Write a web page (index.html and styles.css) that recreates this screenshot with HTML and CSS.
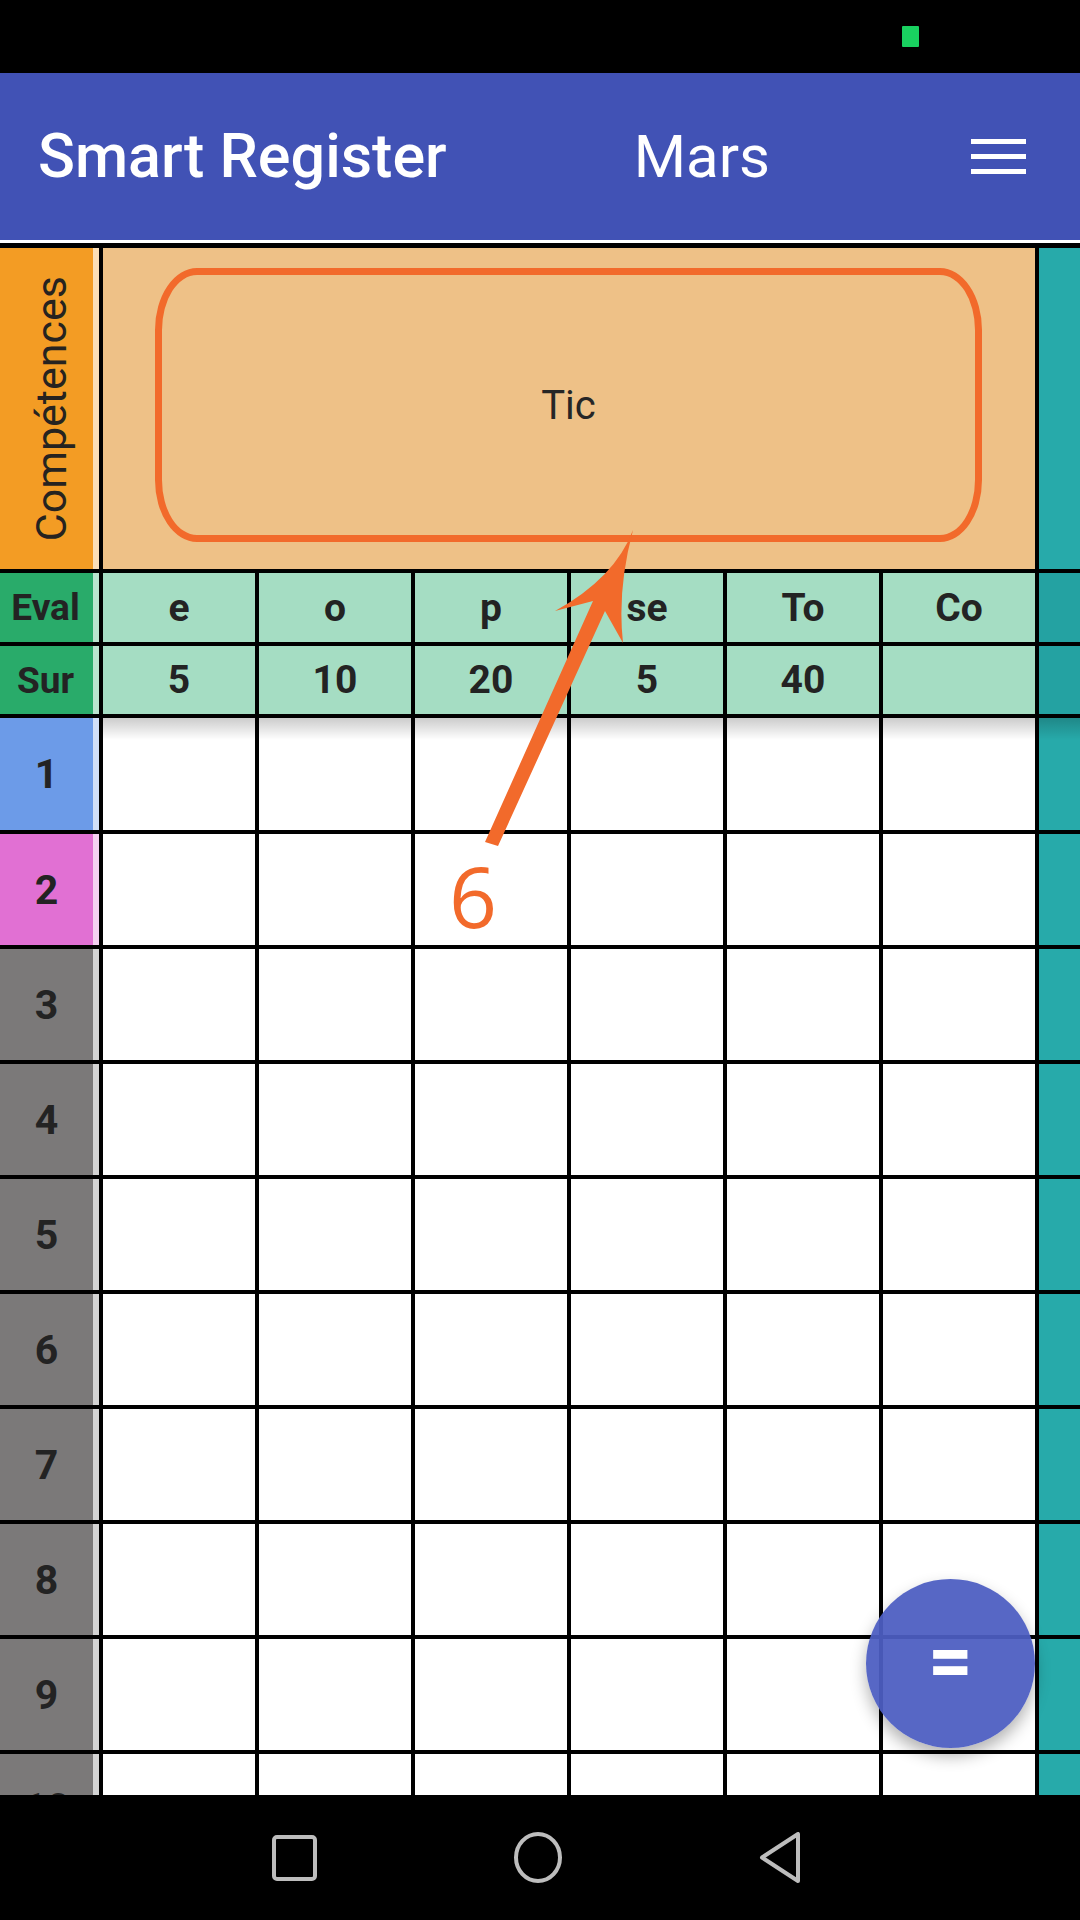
FILE: index.html
```html
<!DOCTYPE html>
<html lang="fr">
<head>
<meta charset="utf-8">
<title>Smart Register</title>
<link rel="stylesheet" href="styles.css">
</head>
<body>
<div class="status"><span class="batt"></span></div>
<header class="appbar">
  <h1 class="title">Smart Register</h1>
  <span class="month">Mars</span>
  <span class="burger"><i></i><i></i><i></i></span>
</header>
<main class="sheet">
  <div class="grid">
    <div class="lab orange"><span class="vert">Compétences</span></div>
    <div class="skill"><div class="skillbox">Tic</div></div>
    <div class="teal"></div>

    <div class="lab green">Eval</div>
    <div class="hd">e</div><div class="hd">o</div><div class="hd">p</div><div class="hd">se</div><div class="hd">To</div><div class="hd">Co</div>
    <div class="teal dark"></div>

    <div class="lab green">Sur</div>
    <div class="hd">5</div><div class="hd">10</div><div class="hd">20</div><div class="hd">5</div><div class="hd">40</div><div class="hd"></div>
    <div class="teal dark"></div>

    <div class="lab blue">1</div>
    <div class="c first"></div><div class="c first"></div><div class="c first"></div><div class="c first"></div><div class="c first"></div><div class="c first"></div>
    <div class="teal first"></div>

    <div class="lab pink">2</div>
    <div class="c"></div><div class="c"></div><div class="c"></div><div class="c"></div><div class="c"></div><div class="c"></div>
    <div class="teal"></div>

    <div class="lab gray">3</div>
    <div class="c"></div><div class="c"></div><div class="c"></div><div class="c"></div><div class="c"></div><div class="c"></div>
    <div class="teal"></div>

    <div class="lab gray">4</div>
    <div class="c"></div><div class="c"></div><div class="c"></div><div class="c"></div><div class="c"></div><div class="c"></div>
    <div class="teal"></div>

    <div class="lab gray">5</div>
    <div class="c"></div><div class="c"></div><div class="c"></div><div class="c"></div><div class="c"></div><div class="c"></div>
    <div class="teal"></div>

    <div class="lab gray">6</div>
    <div class="c"></div><div class="c"></div><div class="c"></div><div class="c"></div><div class="c"></div><div class="c"></div>
    <div class="teal"></div>

    <div class="lab gray">7</div>
    <div class="c"></div><div class="c"></div><div class="c"></div><div class="c"></div><div class="c"></div><div class="c"></div>
    <div class="teal"></div>

    <div class="lab gray">8</div>
    <div class="c"></div><div class="c"></div><div class="c"></div><div class="c"></div><div class="c"></div><div class="c"></div>
    <div class="teal"></div>

    <div class="lab gray">9</div>
    <div class="c"></div><div class="c"></div><div class="c"></div><div class="c"></div><div class="c"></div><div class="c"></div>
    <div class="teal"></div>

    <div class="lab gray last">10</div>
    <div class="c"></div><div class="c"></div><div class="c"></div><div class="c"></div><div class="c"></div><div class="c"></div>
    <div class="teal"></div>
  </div>
</main>
<nav class="navbar">
  <svg class="nav-ico" width="45" height="46" viewBox="0 0 45 46"><rect x="2" y="2" width="41" height="42" rx="3" fill="none" stroke="#bdbdbd" stroke-width="4"/></svg>
  <svg class="nav-ico" width="48" height="51" viewBox="0 0 48 51"><ellipse cx="24" cy="25.5" rx="22" ry="23.5" fill="none" stroke="#bdbdbd" stroke-width="4"/></svg>
  <svg class="nav-ico" width="42" height="51" viewBox="0 0 42 51"><path d="M39 2 L39 49 L3 25.5 Z" fill="none" stroke="#bdbdbd" stroke-width="4" stroke-linejoin="round"/></svg>
</nav>
<button class="fab">=</button>
<svg class="annot" width="1080" height="1920" viewBox="0 0 1080 1920">
  <path d="M633 530 Q615 578 555 611 L593 601 L485 842 L498 846 L605 611 L623 643 Q617 590 633 530 Z" fill="#f26a2b"/>
  <text x="473" y="928" text-anchor="middle" class="six">6</text>
</svg>
</body>
</html>
```
FILE: styles.css
```css
* { box-sizing: border-box; }
html, body { margin: 0; padding: 0; }
body {
  width: 1080px;
  height: 1920px;
  overflow: hidden;
  position: relative;
  background: #000;
  font-family: Roboto, "Liberation Sans", sans-serif;
  color: #222;
}
.status {
  height: 73px;
  background: #000;
  display: flex;
  justify-content: flex-end;
  align-items: flex-start;
  padding: 26px 161px 0 0;
}
.batt {
  width: 17px;
  height: 21px;
  background: #19d160;
  border-radius: 1px;
}
.appbar {
  height: 167px;
  background: #4152b5;
  display: flex;
  align-items: center;
  padding: 0 54px 0 38px;
  color: #fff;
}
.title {
  margin: 0;
  font-size: 61px;
  font-weight: 500;
  line-height: 1;
}
.month {
  font-size: 60px;
  font-weight: 400;
  line-height: 1;
  margin-left: 187px;
}
.burger {
  margin-left: auto;
  display: flex;
  flex-direction: column;
  gap: 10px;
}
.burger i {
  display: block;
  width: 55px;
  height: 5px;
  background: #fff;
}
.sheet {
  height: 1555px;
  overflow: hidden;
  border-top: 3px solid #fff;
  background: #000;
  padding-top: 5px;
}
.grid {
  display: grid;
  grid-template-columns: 99px repeat(6, 152px) 41px;
  grid-template-rows: 321px 69px 68px 112px repeat(9, 111px);
  gap: 4px;
  background: #000;
}
.lab {
  display: flex;
  align-items: center;
  justify-content: center;
  padding-right: 6px;
  font-weight: 700;
  font-size: 41px;
  color: #232323;
  box-shadow: inset -6px 0 0 rgba(255, 255, 255, 0.68);
}
.lab.last { align-items: flex-start; padding-top: 30px; }
.lab.green { font-size: 37px; padding-right: 8px; }
.orange { background: #f39c24; padding-left: 10px; }
.green { background: #29ab6a; }
.blue { background: #6c9be8; }
.pink { background: #e170d3; }
.gray { background: #7b7979; }
.vert {
  writing-mode: vertical-rl;
  transform: rotate(180deg);
  font-size: 43px;
  font-weight: 400;
  line-height: 1;
  color: #262320;
}
.skill {
  grid-column: span 6;
  background: #eec187;
  padding: 20px 53px 27px 52px;
  display: flex;
}
.skillbox {
  flex: 1;
  border: 7px solid #f26a2b;
  border-radius: 42px / 62px;
  display: flex;
  align-items: center;
  justify-content: center;
  font-size: 40px;
  color: #262626;
}
.teal { background: #27aaaa; }
.teal.dark { background: #24a2a2; }
.teal.first { background: linear-gradient(rgba(0,0,0,0.2), rgba(0,0,0,0) 22px), #27aaaa; }
.hd {
  background: #a5ddc3;
  display: flex;
  align-items: center;
  justify-content: center;
  font-weight: 700;
  font-size: 39px;
  color: #232323;
}
.c { background: #fff; }
.c.first { background: linear-gradient(rgba(0,0,0,0.2), rgba(0,0,0,0) 22px), #fff; }
.navbar {
  height: 125px;
  background: #000;
  display: flex;
  align-items: center;
  justify-content: center;
  gap: 197px;
  padding: 0 7px 0 0;
}
.nav-ico { display: block; }
.fab {
  position: absolute;
  left: 866px;
  top: 1579px;
  width: 169px;
  height: 169px;
  border-radius: 50%;
  border: none;
  background: rgba(76, 94, 193, 0.94);
  box-shadow: 0 8px 16px rgba(0, 0, 0, 0.3);
  color: #fff;
  font-family: Roboto, sans-serif;
  font-weight: 700;
  font-size: 78px;
  line-height: 1;
  padding: 0 0 6px 0;
}
.annot {
  position: absolute;
  left: 0;
  top: 0;
  pointer-events: none;
}
.six {
  font-family: "Open Sans", sans-serif;
  font-size: 84px;
  fill: #f26a2b;
}
```
